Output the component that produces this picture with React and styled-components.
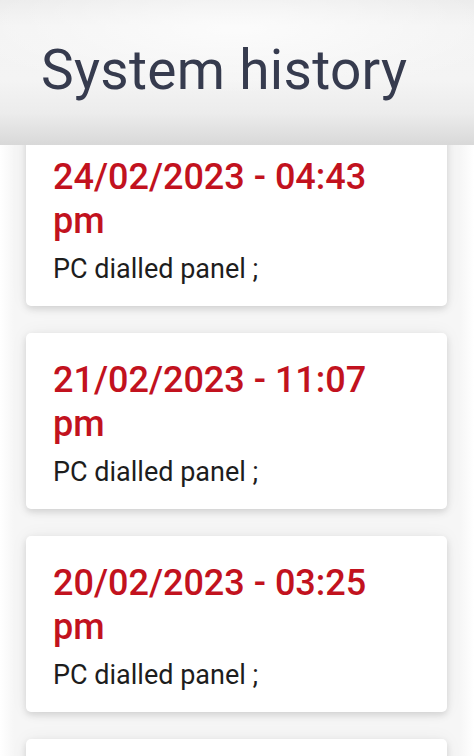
import React from "react";
import styled, { createGlobalStyle } from "styled-components";

const GlobalStyle = createGlobalStyle`
  html, body {
    margin: 0;
    padding: 0;
    background: #ffffff;
    font-family: Roboto, "Noto Sans", "Liberation Sans", sans-serif;
  }
  * { box-sizing: border-box; }
`;

const Screen = styled.div`
  width: 474px;
  height: 756px;
  overflow: hidden;
  position: relative;
  background: linear-gradient(to right, #ffffff 0px, #f6f6f6 14px, #f6f6f6 460px, #ffffff 474px);
`;

const AppBar = styled.header`
  position: absolute;
  top: 0;
  left: 0;
  right: 0;
  height: 145px;
  z-index: 2;
  display: flex;
  align-items: center;
  padding: 0 0 4px 41px;
  background:
    radial-gradient(ellipse 60% 45% at 50% 20%, rgba(255,255,255,0.7), rgba(255,255,255,0) 100%),
    linear-gradient(to bottom, #ebebeb 0%, #f3f3f3 18%, #f4f4f4 55%, #ececec 78%, #dedede 94%, #d8d8d8 100%);
`;

const Title = styled.h1`
  margin: 0;
  font-family: Roboto, "Noto Sans", sans-serif;
  font-weight: 400;
  font-size: 55px;
  letter-spacing: 0.3px;
  color: #363b4e;
  line-height: 1;
`;

const List = styled.main`
  display: flex;
  flex-direction: column;
  gap: 27px;
  padding: 130px 27px 0 26px;
`;

const Card = styled.article`
  flex: none;
  background: #ffffff;
  border-radius: 5px;
  height: 176px;
  padding: 25px 27px 21px 27px;
  box-shadow: 0 3px 7px rgba(0, 0, 0, 0.13), 0 0 18px rgba(0, 0, 0, 0.05);
  display: flex;
  flex-direction: column;
`;

const Stamp = styled.div`
  font-family: Roboto, "Noto Sans", sans-serif;
  font-weight: 500;
  font-size: 36px;
  letter-spacing: 0;
  line-height: 44px;
  color: #c2121e;
  margin-bottom: 10px;
`;

const Message = styled.div`
  font-family: Roboto, "Noto Sans", sans-serif;
  font-weight: 400;
  font-size: 27px;
  line-height: 32px;
  color: #1d1d1d;
`;

const entries = [
  { stamp: "24/02/2023 - 04:43 pm", text: "PC dialled panel ;" },
  { stamp: "21/02/2023 - 11:07 pm", text: "PC dialled panel ;" },
  { stamp: "20/02/2023 - 03:25 pm", text: "PC dialled panel ;" },
];

export default function App() {
  return (
    <>
      <GlobalStyle />
      <Screen>
        <AppBar>
          <Title>System history</Title>
        </AppBar>
        <List>
          {entries.map((e, i) => (
            <Card key={i}>
              <Stamp>{e.stamp}</Stamp>
              <Message>{e.text}</Message>
            </Card>
          ))}
          <Card aria-hidden="true" />
        </List>
      </Screen>
    </>
  );
}
